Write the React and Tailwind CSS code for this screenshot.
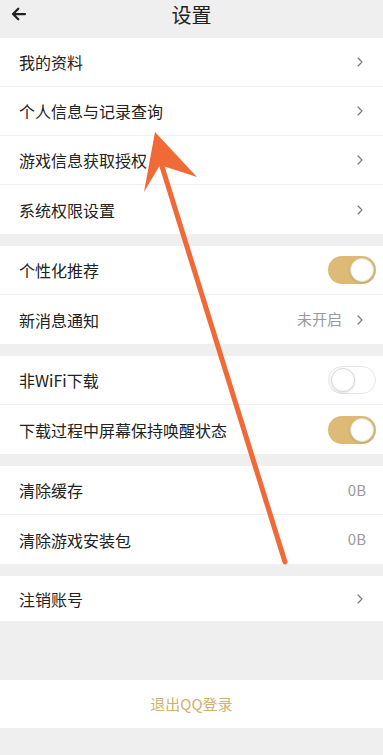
import { ChevronRight } from 'lucide-react';

const font = { fontFamily: '"Noto Sans CJK SC", "Noto Sans", sans-serif' };

const Toggle = ({ on }) => (
  <div
    className={`w-[48px] h-[28px] rounded-full flex items-center p-[2px] ${
      on ? 'bg-[#dfba76] justify-end' : 'bg-white border border-[#e6e6e6] justify-start'
    }`}
  >
    <div className="w-[24px] h-[24px] rounded-full bg-white border border-[#d8d8d8] shadow-sm" />
  </div>
);

const Row = ({ label, value, chevron, toggle, last, h = 'h-[49px]' }) => (
  <div className={`${h} bg-white flex items-center pl-[19px] pr-[7px] ${last ? '' : 'border-b border-[#f0f0f0]'}`}>
    <span className="flex-1 text-[16px] text-[#222]">{label}</span>
    {value && <span className="text-[15px] text-[#9a9a9a] mr-[10px]">{value}</span>}
    {chevron && <ChevronRight size={16} strokeWidth={1.6} className="text-[#777] mr-[8px]" />}
    {toggle !== undefined && <Toggle on={toggle} />}
  </div>
);

const Gap = () => <div className="h-[12px] bg-[#efefef]" />;

export default function App() {
  return (
    <div className="relative w-[383px] h-[755px] bg-[#efefef] overflow-hidden" style={font}>
      {/* header */}
      <div className="h-[38px] flex items-center justify-center relative">
        <svg className="absolute left-[10px] top-[5px]" width="18" height="18" viewBox="0 0 24 24" fill="none" stroke="#222" strokeWidth="3" strokeLinecap="round" strokeLinejoin="round">
          <path d="M20 12H5M11 5l-7 7 7 7" />
        </svg>
        <span className="text-[20px] text-[#222] -mt-[8px]">设置</span>
      </div>

      <Row label="我的资料" chevron />
      <Row label="个人信息与记录查询" chevron />
      <Row label="游戏信息获取授权" chevron />
      <Row label="系统权限设置" chevron last />
      <Gap />
      <Row label="个性化推荐" toggle={true} />
      <Row label="新消息通知" value="未开启" chevron last />
      <Gap />
      <Row label="非WiFi下载" toggle={false} />
      <Row label="下载过程中屏幕保持唤醒状态" toggle={true} last />
      <Gap />
      <Row label="清除缓存" value="0B" />
      <Row label="清除游戏安装包" value="0B" last />
      <Gap />
      <Row label="注销账号" chevron last h="h-[45px]" />

      <div className="h-[59px]" />
      <div className="h-[48px] bg-white flex items-center justify-center">
        <span className="text-[15px] text-[#d2b06a]">退出QQ登录</span>
      </div>

      {/* annotation arrow */}
      <svg className="absolute left-0 top-0 pointer-events-none" width="383" height="755">
        <line x1="285" y1="562" x2="160" y2="160" stroke="#f06a38" strokeWidth="5" strokeLinecap="round" />
        <polygon points="155,132 144,192 160,165 197,177" fill="#f06a38" />
      </svg>
    </div>
  );
}
